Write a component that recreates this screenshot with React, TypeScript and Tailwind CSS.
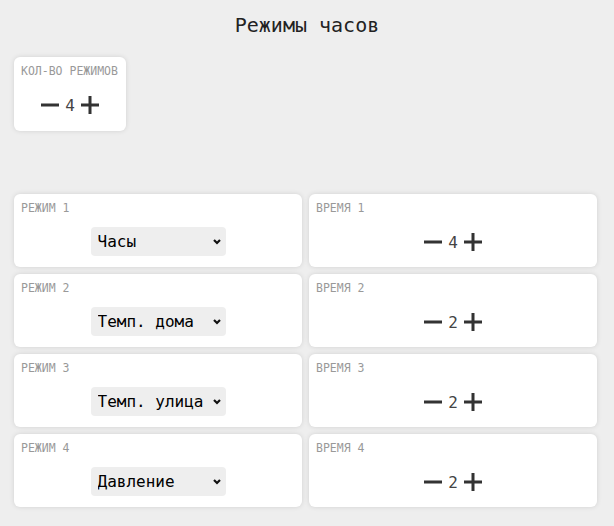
import { useState } from 'react'

const MODES = ['Часы', 'Темп. дома', 'Темп. улица', 'Давление', 'Влажность']

type Row = { mode: string; time: number }

function Minus() {
  return (
    <svg width="18" height="18" viewBox="0 0 18 18" className="block">
      <rect x="0" y="7.5" width="18" height="3" fill="#333" />
    </svg>
  )
}

function Plus() {
  return (
    <svg width="18" height="18" viewBox="0 0 18 18" className="block">
      <rect x="0" y="7.5" width="18" height="3" fill="#333" />
      <rect x="7.5" y="0" width="3" height="18" fill="#333" />
    </svg>
  )
}

function Stepper({ value, onChange }: { value: number; onChange: (v: number) => void }) {
  return (
    <div className="flex items-center justify-center">
      <button className="cursor-pointer" onClick={() => onChange(Math.max(0, value - 1))}>
        <Minus />
      </button>
      <span className="mx-[6px] pt-[2px] text-[16px] leading-none text-[#444]">{value}</span>
      <button className="cursor-pointer" onClick={() => onChange(value + 1)}>
        <Plus />
      </button>
    </div>
  )
}

function Label({ children }: { children: string }) {
  return (
    <div className="h-[14px] whitespace-nowrap text-[11.5px] leading-[14px] text-[#999] uppercase">{children}</div>
  )
}

function Card({ className = '', children }: { className?: string; children: React.ReactNode }) {
  return (
    <div className={`rounded-[6px] bg-white shadow-[0_0_5px_rgba(0,0,0,0.12)] ${className}`}>{children}</div>
  )
}

export default function App() {
  const [count, setCount] = useState(4)
  const [rows, setRows] = useState<Row[]>([
    { mode: 'Часы', time: 4 },
    { mode: 'Темп. дома', time: 2 },
    { mode: 'Темп. улица', time: 2 },
    { mode: 'Давление', time: 2 },
  ])

  const update = (i: number, patch: Partial<Row>) =>
    setRows(rows.map((r, j) => (j === i ? { ...r, ...patch } : r)))

  return (
    <div className="min-h-[526px] bg-[#eeeeee] font-['DejaVu_Sans_Mono',monospace] text-[#222]">
      <h1 className="pt-[11px] text-center text-[20px] leading-[28px] text-[#222]">Режимы часов</h1>

      <div className="pl-[14px] pt-[18px]">
        <Card className="h-[74px] w-[112px] px-[7px] pt-[7px]">
          <Label>Кол-во режимов</Label>
          <div className="mt-[18px]">
            <Stepper value={count} onChange={setCount} />
          </div>
        </Card>
      </div>

      <div className="mt-[63px] grid grid-cols-[288px_288px] gap-[7px] pl-[14px]">
        {rows.map((r, i) => (
          <div key={i} className="contents">
            <Card className="h-[73px] px-[7px] pt-[7px]">
              <Label>{`Режим ${i + 1}`}</Label>
              <div className="mt-[12px] flex justify-center">
                <div className="relative h-[29px] w-[135px]">
                  <select
                    value={r.mode}
                    onChange={(e) => update(i, { mode: e.target.value })}
                    className="h-full w-full appearance-none overflow-hidden rounded-[4px] bg-[#eeeeee] pl-[7px] pr-[16px] text-[16px] text-black outline-none"
                  >
                    {MODES.map((m) => (
                      <option key={m}>{m}</option>
                    ))}
                  </select>
                  <svg
                    width="8"
                    height="6"
                    viewBox="0 0 8 6"
                    className="pointer-events-none absolute right-[5px] top-[12px]"
                  >
                    <path d="M1 1l3 3 3-3" stroke="#111" strokeWidth="2.2" fill="none" />
                  </svg>
                </div>
              </div>
            </Card>
            <Card className="h-[73px] px-[7px] pt-[7px]">
              <Label>{`Время ${i + 1}`}</Label>
              <div className="mt-[18px]">
                <Stepper value={r.time} onChange={(v) => update(i, { time: v })} />
              </div>
            </Card>
          </div>
        ))}
      </div>
    </div>
  )
}
